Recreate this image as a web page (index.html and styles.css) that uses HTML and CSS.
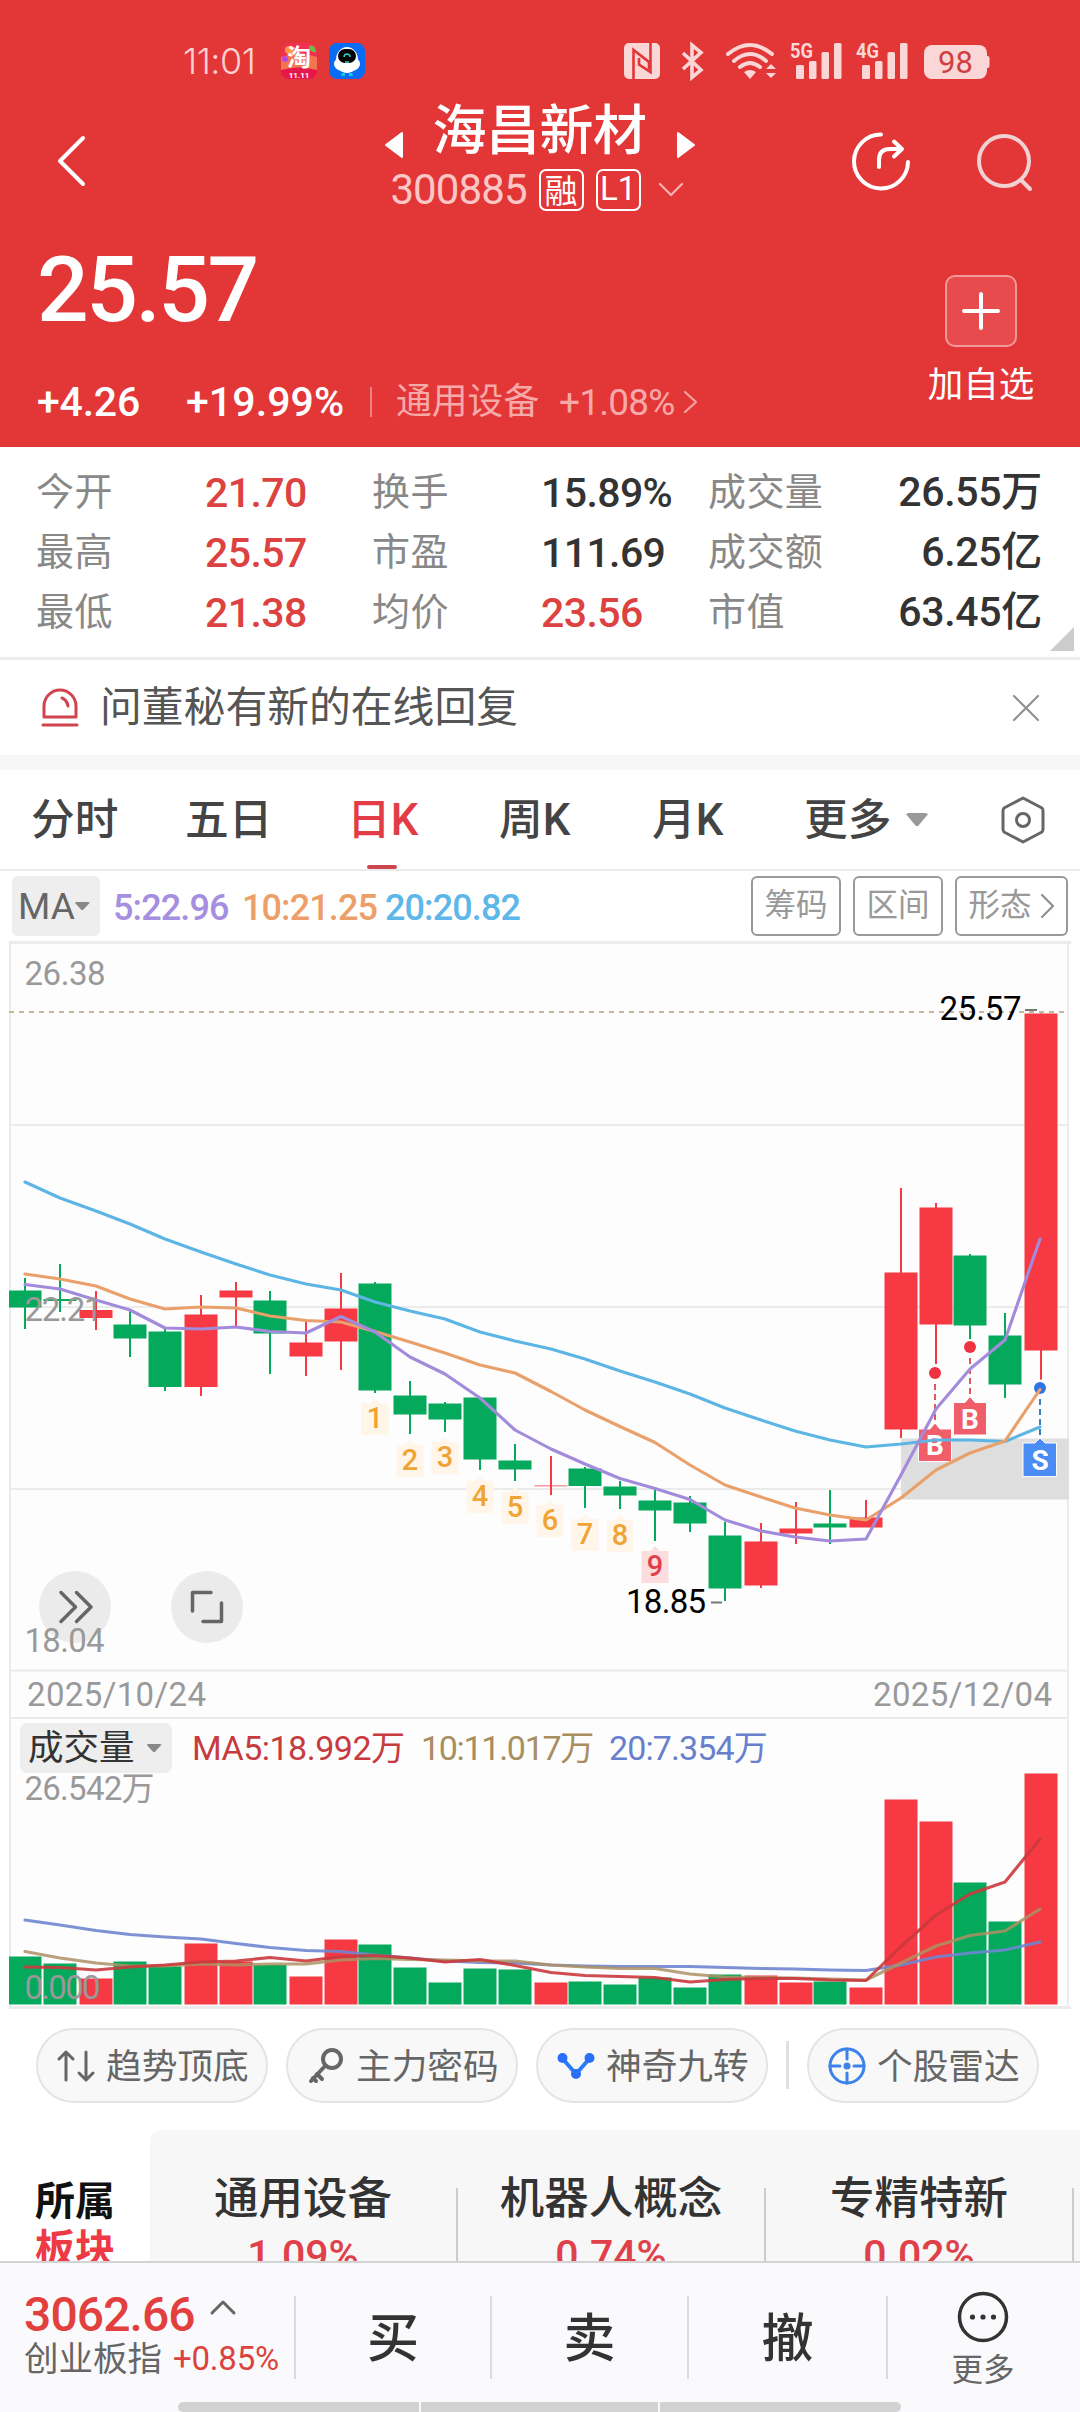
FILE: index.html
```html
<!DOCTYPE html>
<html lang="zh-CN">
<head>
<meta charset="utf-8">
<title>海昌新材 300885</title>
<link rel="stylesheet" href="styles.css">
</head>
<body>
<div class="screen">
  <header class="header">
    <div class="status">
      <span class="clock">11:01</span>
      <svg class="app" width="36" height="36" viewBox="0 0 36 36">
        <rect width="36" height="36" rx="8" fill="#f2304f"/>
        <path d="M0 14Q18 8 36 14V27H0z" fill="#f4744f"/>
        <circle cx="8" cy="7" r="4" fill="#ff9a3c"/><circle cx="4" cy="16" r="3" fill="#b64be0"/>
        <path d="M28 3q6-2 7 6q-6 1-7-6z" fill="#6cc04a"/>
        <path d="M0 27Q18 22 36 27V29Q34 36 28 36H8Q1 35 0 29z" fill="#e5174a"/>
        <text x="18" y="23" class="app-glyph">淘</text>
        <text x="18" y="34.500" class="app-sale">11.11</text>
      </svg>
      <svg class="app" width="36" height="36" viewBox="0 0 36 36">
        <rect width="36" height="36" rx="8" fill="#0a6cf5"/>
        <path d="M13 30h3v3h-4zM20 30h3l1 3h-4z" fill="#19c8d8"/>
        <ellipse cx="18" cy="21" rx="13" ry="8" fill="#fff"/><ellipse cx="18" cy="17" rx="11" ry="13" fill="#fff"/>
        <rect x="9" y="6" width="18" height="14" rx="7" fill="#000"/>
        <path d="M15 14a3 3 0 0 1 6 0M16 19h4" fill="none" stroke="#25d5c5" stroke-width="1.500"/>
      </svg>
      <svg class="signals" width="366" height="60" viewBox="624 31 366 60">
        <rect x="624" y="43" width="36" height="36" rx="5" fill="#fad6d6"/>
        <path d="M633.500 79V50L649 62V69M650.500 43V72L639 64.500V58" fill="none" stroke="#e33637" stroke-width="2.600"/>
        <path d="M683 53L701 70L692 77.500V45L701 52.500L683 69" fill="none" stroke="#fad6d6" stroke-width="3.600"/>
        <g fill="none" stroke="#fad6d6" stroke-width="4" stroke-linecap="round">
          <path d="M728 54Q750 36 772 54M734 61Q750 47 766 61M740 67Q750 59 760 67"/>
        </g>
        <path d="M744 72Q750 68 756 72L750 79zM766 69l5-5l5 5zM766 73l5 5l5-5z" fill="#fad6d6"/>
        <g fill="#fad6d6">
          <rect x="796" y="65" width="8" height="14" rx="1.500"/><rect x="809" y="61" width="7.500" height="18" rx="1.500"/><rect x="821.500" y="52" width="7.500" height="27" rx="1.500"/><rect x="834" y="43" width="7.500" height="36" rx="1.500"/>
          <rect x="862" y="65" width="8" height="14" rx="1.500"/><rect x="875" y="61" width="7.500" height="18" rx="1.500"/><rect x="887.500" y="52" width="7.500" height="27" rx="1.500"/><rect x="900" y="43" width="7.500" height="36" rx="1.500"/>
          <rect x="924" y="45" width="63" height="34" rx="8"/><rect x="985" y="56" width="4.500" height="12" rx="2"/>
        </g>
        <text x="790" y="57.500" class="net" textLength="23" lengthAdjust="spacingAndGlyphs">5G</text>
        <text x="856" y="57.500" class="net" textLength="23" lengthAdjust="spacingAndGlyphs">4G</text>
        <text x="955.500" y="72.500" class="battery">98</text>
      </svg>
    </div>

    <div class="nav">
      <svg class="back" width="30" height="52" viewBox="0 0 30 52"><path d="M26 3L3 26L26 49" class="line w4"/></svg>
      <div class="title">
        <div class="name-row">
          <svg width="18" height="28" viewBox="0 0 18 28"><path d="M17 2V26L1 14z" class="tri"/></svg>
          <h1>海昌新材</h1>
          <svg width="18" height="28" viewBox="0 0 18 28"><path d="M1 2V26L17 14z" class="tri"/></svg>
        </div>
        <div class="code-row">
          <span class="code">300885</span><span class="tag">融</span><span class="tag tag-l1">L1</span>
          <svg class="code-arrow" width="26" height="16" viewBox="0 0 26 16"><path d="M2 2L13 13L24 2" class="line w2 pale"/></svg>
        </div>
      </div>
      <div class="nav-actions">
        <svg width="60" height="60" viewBox="0 0 60 60"><path d="M30 2.500A27 27 0 1 0 57 30M28 35V28Q28 17 39 17H50M43 9.500L51 17L43 24.500" class="line w4"/></svg>
        <svg width="60" height="60" viewBox="0 0 60 60"><circle cx="29" cy="29" r="25" class="line w4 soft"/><path d="M46 48L55 57" class="line w4 soft"/></svg>
      </div>
    </div>

    <div class="quote">
      <div class="quote-main">
        <div class="price">25.57</div>
        <div class="change-row">
          <span class="chg">+4.26</span><span class="pct">+19.99%</span><i class="bar"></i>
          <span class="sector">通用设备</span><span class="sector-pct">+1.08%</span>
          <svg width="16" height="24" viewBox="0 0 16 24"><path d="M2 2L13 12L2 22" class="line w2 pink"/></svg>
        </div>
      </div>
      <div class="add">
        <div class="add-box"><svg width="40" height="40" viewBox="0 0 40 40"><path d="M20 3V37M3 20H37" class="line w4"/></svg></div>
        <span>加自选</span>
      </div>
    </div>
  </header>

  <section class="stats">
    <span class="k">今开</span><span class="v up">21.70</span><span class="k">换手</span><span class="v">15.89%</span><span class="k">成交量</span><span class="v end">26.55万</span>
    <span class="k">最高</span><span class="v up">25.57</span><span class="k">市盈</span><span class="v">111.69</span><span class="k">成交额</span><span class="v end">6.25亿</span>
    <span class="k">最低</span><span class="v up">21.38</span><span class="k">均价</span><span class="v up">23.56</span><span class="k">市值</span><span class="v end">63.45亿</span>
    <i class="corner"></i>
  </section>

  <section class="notice">
    <svg width="38" height="40" viewBox="0 0 38 40"><path d="M3 29V18a16 16 0 0 1 32 0V29zM2 37H36M21 10Q26 12 27 18" class="line w3 crimson"/></svg>
    <span>问董秘有新的在线回复</span>
    <svg class="close" width="30" height="30" viewBox="0 0 30 30"><path d="M3 3L27 27M27 3L3 27" class="line w2 gray"/></svg>
  </section>

  <nav class="tabs">
    <span>分时</span><span>五日</span><span class="active">日K</span><span>周K</span><span>月K</span><span>更多</span>
    <i class="caret"></i>
    <svg width="46" height="50" viewBox="0 0 46 50"><path d="M23 3L42 13Q43 14 43 16V34Q43 36 42 37L23 47L4 37Q3 36 3 34V16Q3 14 4 13z" class="line w3 dark"/><circle cx="23" cy="25" r="6.500" class="line w3 dark"/></svg>
  </nav>

  <div class="ma-row">
    <span class="ma-pick">MA<i class="caret small"></i></span>
    <span class="m5">5:22.96</span><span class="m10">10:21.25</span><span class="m20">20:20.82</span>
    <span class="btn first">筹码</span><span class="btn">区间</span><span class="btn wide">形态<svg width="14" height="26" viewBox="0 0 14 26"><path d="M1 2L12 13L1 24" class="line w2 gray"/></svg></span>
  </div>

  <svg class="chart" width="1080" height="778" viewBox="0 941 1080 778">
    <rect x="9" y="941" width="1060" height="778" fill="#fdfdfd"/>
    <g fill="#ebebeb">
      <rect x="9" y="941" width="1062" height="3"/><rect x="9" y="941" width="2" height="778"/><rect x="1067" y="941" width="2" height="778"/>
      <rect x="9" y="1124" width="1060" height="2"/><rect x="9" y="1306" width="1060" height="2"/><rect x="9" y="1488" width="1060" height="2"/><rect x="9" y="1669.500" width="1060" height="2"/><rect x="9" y="1717" width="1060" height="2"/>
    </g>
    <rect x="901" y="1438.500" width="168" height="61" fill="#dedede"/>
    <g fill="#05a95c">
      <rect x="9" y="1290.500" width="32.500" height="17"/><rect x="24" y="1278" width="2" height="51"/>
      <rect x="43.500" y="1299" width="33" height="2"/><rect x="59" y="1264" width="2" height="48"/>
      <rect x="113.500" y="1324.500" width="33" height="14"/><rect x="129" y="1311" width="2" height="46"/>
      <rect x="148.500" y="1331.500" width="33" height="55.500"/><rect x="164" y="1329" width="2" height="62"/>
      <rect x="253.500" y="1300.500" width="33" height="33"/><rect x="269" y="1291" width="2" height="83"/>
      <rect x="358.500" y="1283.500" width="33" height="107"/><rect x="374" y="1282" width="2" height="111"/>
      <rect x="393.500" y="1395.500" width="33" height="19"/><rect x="409" y="1381" width="2" height="53"/>
      <rect x="428.500" y="1403.500" width="33" height="16"/><rect x="444" y="1402" width="2" height="30"/>
      <rect x="463.500" y="1397.500" width="33" height="62"/><rect x="479" y="1397" width="2" height="73"/>
      <rect x="498.500" y="1460.500" width="33" height="9"/><rect x="514" y="1444" width="2" height="37"/>
      <rect x="568.500" y="1468.500" width="33" height="17.500"/><rect x="584" y="1467" width="2" height="41"/>
      <rect x="603.500" y="1486.500" width="33" height="9"/><rect x="619" y="1481" width="2" height="28"/>
      <rect x="638.500" y="1500.500" width="33" height="10"/><rect x="654" y="1489" width="2" height="52"/>
      <rect x="673.500" y="1502.500" width="33" height="21"/><rect x="689" y="1496" width="2" height="36"/>
      <rect x="708.500" y="1535.500" width="33" height="53"/><rect x="724" y="1522" width="2" height="79"/>
      <rect x="813.500" y="1523.500" width="33" height="4"/><rect x="829" y="1490" width="2" height="54"/>
      <rect x="953.500" y="1255.500" width="33" height="70"/><rect x="969" y="1254" width="2" height="85"/>
      <rect x="988.500" y="1335.500" width="33" height="49"/><rect x="1004" y="1313" width="2" height="85"/>
    </g>
    <g fill="#f63943">
      <rect x="79.500" y="1310" width="33" height="8"/><rect x="95" y="1291" width="2" height="39"/>
      <rect x="184.500" y="1314.500" width="33" height="72.500"/><rect x="200" y="1295" width="2" height="101"/>
      <rect x="219.500" y="1290.500" width="33" height="7"/><rect x="235" y="1282" width="2" height="45"/>
      <rect x="289.500" y="1342.500" width="33" height="14"/><rect x="305" y="1322" width="2" height="54"/>
      <rect x="324.500" y="1308.500" width="33" height="33"/><rect x="340" y="1273" width="2" height="97"/>
      <rect x="534.500" y="1485" width="33" height="1.500" opacity=".5"/><rect x="550" y="1456" width="2" height="39"/>
      <rect x="744.500" y="1541.500" width="33" height="44"/><rect x="760" y="1523" width="2" height="65"/>
      <rect x="779.500" y="1528.500" width="33" height="5"/><rect x="795" y="1502" width="2" height="42"/>
      <rect x="849.500" y="1517.500" width="33" height="10"/><rect x="865" y="1500" width="2" height="18"/>
      <rect x="884.500" y="1272.500" width="33" height="157"/><rect x="900" y="1188" width="2" height="250"/>
      <rect x="919.500" y="1207.500" width="33" height="117"/><rect x="935" y="1203" width="2" height="161"/>
      <rect x="1024.500" y="1013.500" width="33" height="337"/><rect x="1040" y="1013.500" width="2" height="366"/>
    </g>
    <path d="M9 1012H1069" stroke="#c5b799" stroke-width="2" stroke-dasharray="5 5"/>
    <g fill="#fff5e9">
      <path d="M361.500 1403h9l4.500-5l4.500 5h9v32h-27z"/><path d="M396.500 1445h9l4.500-5l4.500 5h9v32h-27z"/><path d="M431.500 1442h9l4.500-5l4.500 5h9v32h-27z"/>
      <path d="M466.500 1481h9l4.500-5l4.500 5h9v32h-27z"/><path d="M501.500 1492h9l4.500-5l4.500 5h9v32h-27z"/><path d="M536.500 1505h9l4.500-5l4.500 5h9v32h-27z"/>
      <path d="M571.500 1519h9l4.500-5l4.500 5h9v32h-27z"/><path d="M606.500 1520h9l4.500-5l4.500 5h9v32h-27z"/><path d="M641.500 1551h9l4.500-5l4.500 5h9v32h-27z" fill="#fddcde"/>
    </g>
    <g class="nine">
      <text x="375" y="1428">1</text><text x="410" y="1470">2</text><text x="445" y="1467">3</text><text x="480" y="1506">4</text><text x="515" y="1517">5</text><text x="550" y="1530">6</text><text x="585" y="1544">7</text><text x="620" y="1545">8</text><text x="655" y="1576" fill="#e0404a">9</text>
    </g>
    <path d="M935 1384V1424M970 1358V1394" stroke="#e0565f" stroke-width="2" stroke-dasharray="6 4"/>
    <circle cx="935" cy="1373" r="6" fill="#f03340"/><circle cx="970" cy="1347" r="6" fill="#f03340"/>
    <g fill="#f05f69" stroke="#fff">
      <path d="M918.500 1429H930L935 1423L940 1429H951.500V1461.500H918.500z"/><path d="M953.500 1402.500H965L970 1396.500L975 1402.500H986.500V1435H953.500z"/>
    </g>
    <text x="935" y="1455" class="mark">B</text><text x="970" y="1429" class="mark">B</text>
    <path d="M1040 1399V1436" stroke="#3f7fc0" stroke-width="2" stroke-dasharray="6 4"/><circle cx="1040" cy="1388" r="6" fill="#2f73e6"/>
    <path d="M1023 1443H1035L1040 1438L1045 1443H1056.500V1476.500H1023z" fill="#4a8bf4" stroke="#fff"/><text x="1040" y="1470" class="mark">S</text>
    <g fill="none" stroke-width="3.100" stroke-linejoin="round" stroke-linecap="round">
      <path stroke="#5db5e4" d="M25 1182L60 1198L96 1211L130 1224L165 1239L201 1252L236 1264L270 1275L306 1284L341 1290L375 1302L410 1311L445 1319L480 1332L515 1341L551 1349L585 1359L620 1371L655 1382L690 1394L725 1408L761 1420L795 1431L830 1440L866 1447L901 1444L936 1440L970 1440L1005 1441.500L1040 1427"/>
      <path stroke="#e9a06a" d="M25 1274L60 1279L96 1286L130 1299L165 1309L201 1307L236 1308L270 1316L306 1320.500L341 1322L375 1331.500L410 1342L445 1353L480 1365L515 1373L551 1391.500L585 1410L620 1426.500L655 1442.500L690 1465L725 1485L761 1497L795 1508L830 1515L866 1520L901 1498L936 1470L970 1453L1005 1441L1040 1389.500"/>
      <path stroke="#a38bdb" d="M25 1284.500L60 1289L96 1300L130 1310L165 1328L201 1329L236 1327L270 1331.500L306 1333L341 1316.500L375 1332L410 1357L445 1374L480 1398L515 1430L551 1449L585 1464L620 1478.500L655 1488.500L690 1499.500L725 1520L761 1531L795 1537L830 1541L866 1539L901 1475L936 1409L970 1369L1005 1340L1040 1239"/>
    </g>
    <circle cx="75" cy="1607" r="36" fill="#ebebeb"/><circle cx="207" cy="1607" r="36" fill="#ebebeb"/>
    <path d="M61 1592.500L75.500 1607L61 1621.500M76.500 1592.500L91 1607L76.500 1621.500M211 1592.500H192.500V1611M203 1621.500H221.500V1603" fill="none" stroke="#666" stroke-width="3.500" stroke-linecap="round" stroke-linejoin="round"/>
    <g class="axis">
      <text x="24.500" y="985" textLength="81">26.38</text><text x="24.500" y="1321" textLength="78">22.21</text><text x="24.500" y="1652" textLength="80">18.04</text>
      <text x="27" y="1706" textLength="179">2025/10/24</text><text x="873" y="1706" textLength="179">2025/12/04</text>
    </g>
    <g class="extreme"><text x="939.500" y="1020" textLength="82">25.57</text><text x="626" y="1613" textLength="80">18.85</text></g>
    <path d="M1025 1010H1037M711 1602.500H722" stroke="#777" stroke-width="2"/>
  </svg>

  <div class="vol-row">
    <span class="vol-pick">成交量<i class="caret small"></i></span>
    <span class="v5">MA5:18.992万</span><span class="v10">10:11.017万</span><span class="v20">20:7.354万</span>
  </div>

  <svg class="chart" width="1080" height="237" viewBox="0 1773 1080 237">
    <rect x="9" y="1773" width="1060" height="233" fill="#fdfdfd"/>
    <g fill="#ebebeb"><rect x="9" y="1773" width="2" height="233"/><rect x="1067" y="1773" width="2" height="233"/><rect x="9" y="2006" width="1062" height="3"/></g>
    <g fill="#05a95c">
      <rect x="9" y="1956.500" width="32.500" height="48"/><rect x="43.500" y="1963.500" width="33" height="41"/><rect x="113.500" y="1961.500" width="33" height="43"/><rect x="148.500" y="1966.500" width="33" height="38"/>
      <rect x="253.500" y="1965" width="33" height="39.500"/><rect x="358.500" y="1944.500" width="33" height="60"/><rect x="393.500" y="1967.500" width="33" height="37"/><rect x="428.500" y="1982.500" width="33" height="22"/>
      <rect x="463.500" y="1968.500" width="33" height="36"/><rect x="498.500" y="1969.500" width="33" height="35"/><rect x="568.500" y="1981.500" width="33" height="23"/><rect x="603.500" y="1984.500" width="33" height="20"/>
      <rect x="638.500" y="1977.500" width="33" height="27"/><rect x="673.500" y="1987.500" width="33" height="17"/><rect x="708.500" y="1974.500" width="33" height="30"/><rect x="813.500" y="1981.500" width="33" height="23"/>
      <rect x="953.500" y="1882.500" width="33" height="122"/><rect x="988.500" y="1921.500" width="33" height="83"/>
    </g>
    <g fill="#f63943">
      <rect x="79.500" y="1978.500" width="33" height="26"/><rect x="184.500" y="1943.500" width="33" height="61"/><rect x="219.500" y="1961.500" width="33" height="43"/><rect x="289.500" y="1976.500" width="33" height="28"/>
      <rect x="324.500" y="1939.500" width="33" height="65"/><rect x="534.500" y="1982.500" width="33" height="22"/><rect x="744.500" y="1975.500" width="33" height="29"/><rect x="779.500" y="1982.500" width="33" height="22"/>
      <rect x="849.500" y="1987.500" width="33" height="17"/><rect x="884.500" y="1799.500" width="33" height="205"/><rect x="919.500" y="1821.500" width="33" height="183"/><rect x="1024.500" y="1773.500" width="33" height="231"/>
    </g>
    <g fill="none" stroke-width="3.100" stroke-linejoin="round" stroke-linecap="round">
      <path stroke="#6f86d0" stroke-opacity=".9" d="M25 1920L60 1925L96 1930.500L130 1934.500L165 1937L201 1939L236 1943.500L270 1947.500L306 1950.500L341 1951.500L375 1955L410 1958L445 1961L480 1962.500L515 1963L551 1965L585 1966L620 1966.500L690 1966.500L725 1967.500L761 1968.500L795 1969L830 1970L866 1970.500L901 1965L936 1957L970 1953L1005 1950L1040 1942"/>
      <path stroke="#ad9164" stroke-opacity=".85" d="M25 1951.500L60 1958L96 1963L130 1966L165 1966L201 1964L236 1965L270 1964L306 1964L341 1960L375 1958.500L410 1959.500L445 1960L480 1961L515 1961L551 1965L585 1967L620 1968.500L655 1968.500L690 1974L725 1977L761 1977.500L795 1978L830 1979L866 1980L901 1963L936 1946L970 1935.500L1005 1931L1040 1909"/>
      <path stroke="#ca3a3d" stroke-opacity=".9" d="M25 1967L60 1967.500L96 1970L130 1967L165 1965L201 1962L236 1961L270 1957.500L306 1961L341 1956.500L375 1955.500L410 1958L445 1962L480 1959.500L515 1965.500L551 1972.500L585 1975.500L620 1976.500L655 1977.500L690 1982L725 1979.500L761 1978.500L795 1978.500L830 1980L866 1980.500L901 1946.500L936 1915L970 1894L1005 1882L1040 1839"/>
    </g>
    <g class="axis"><text x="24.500" y="1800" textLength="130">26.542万</text><text x="24.500" y="1999" textLength="76">0.000</text></g>
  </svg>

  <div class="chips">
    <span class="chip"><svg width="38" height="32" viewBox="0 0 38 32"><path d="M9 30V2L2 9M9 2L16 9M29 2V30L22 23M29 30L36 23" class="line w3 dark"/></svg><b>趋势顶底</b></span>
    <span class="chip"><svg width="38" height="38" viewBox="0 0 38 38"><circle cx="25" cy="12" r="9" class="line w4 dark"/><path d="M18.500 18.500L4 34M10 27L15 32M6 31L9 34" class="line w4 dark"/></svg><b>主力密码</b></span>
    <span class="chip"><svg width="38" height="28" viewBox="0 0 38 28"><path d="M5 6L19 22L33 6" fill="none" stroke="#2b7cf6" stroke-width="4"/><circle cx="5.500" cy="6" r="5" fill="#2b6ff6"/><circle cx="32.500" cy="6" r="5" fill="#2b6ff6"/><circle cx="19" cy="22" r="5" fill="#2b6ff6"/></svg><b>神奇九转</b></span>
    <i class="chip-bar"></i>
    <span class="chip"><svg width="38" height="38" viewBox="0 0 38 38"><circle cx="19" cy="19" r="17" class="line w3 blue"/><path d="M19 2V12M19 26V36M2 19H12M26 19H36" class="line w3 blue"/><circle cx="19" cy="19" r="3.500" fill="#3d82ea"/></svg><b>个股雷达</b></span>
  </div>

  <section class="boards">
    <div class="boards-title"><b>所属</b><b class="hot">板块</b></div>
    <div class="board"><span>通用设备</span><em>1.09%</em></div>
    <div class="board"><span>机器人概念</span><em>0.74%</em></div>
    <div class="board"><span>专精特新</span><em>0.02%</em></div>
  </section>

  <footer class="footer">
    <div class="index">
      <div class="index-top"><span>3062.66</span><svg width="26" height="16" viewBox="0 0 26 16"><path d="M2 13L13 2L24 13" class="line w3 dark"/></svg></div>
      <div class="index-bottom"><span>创业板指</span><em>+0.85%</em></div>
    </div>
    <div class="act">买</div><div class="act">卖</div><div class="act">撤</div>
    <div class="more">
      <svg width="52" height="52" viewBox="0 0 52 52"><circle cx="26" cy="26" r="23.500" fill="none" stroke="#333" stroke-width="3.500"/><circle cx="15.500" cy="26" r="2.600" fill="#333"/><circle cx="26" cy="26" r="2.600" fill="#333"/><circle cx="36.500" cy="26" r="2.600" fill="#333"/></svg>
      <span>更多</span>
    </div>
    <div class="home"><i></i><i></i><i></i></div>
  </footer>
</div>
</body>
</html>
```
FILE: styles.css
```css
* { box-sizing: border-box; }
html, body { margin: 0; padding: 0; }
body { background: #fff; font-family: Roboto, "Noto Sans CJK SC", sans-serif; color: #333; }
i, em { font-style: normal; }
svg { display: block; flex: none; overflow: visible; }
span { white-space: nowrap; }
.screen { width: 1080px; height: 2412px; overflow: hidden; display: flex; flex-direction: column; }
.screen > * { flex: none; }

.line { fill: none; stroke: #fff; stroke-linecap: round; stroke-linejoin: round; }
.w2 { stroke-width: 2.2; }
.w3 { stroke-width: 3; }
.w4 { stroke-width: 4; }
.pale { stroke: #f7b5b5; }
.pink { stroke: #f5a3a3; }
.soft { stroke: #f0d2d3; }
.crimson { stroke: #d0454d; }
.gray { stroke: #909090; }
.dark { stroke: #666; }
.blue { stroke: #3d82ea; }
.tri { fill: #fff; stroke: #fff; stroke-width: 2; stroke-linejoin: round; }

/* header */
.header { height: 447px; background: #e33637; color: #fff; }
.status { height: 96px; padding: 26px 90px 0 183px; display: flex; align-items: center; }
.clock { width: 98px; font: 300 36px/40px Inter, sans-serif; letter-spacing: -0.5px; color: #fbd0d0; }
.app { margin-right: 12px; }
.app-glyph { font: 700 24px "Noto Sans CJK SC", sans-serif; fill: #fff; text-anchor: middle; }
.app-sale { font: 700 8px Roboto, sans-serif; fill: #fff; text-anchor: middle; }
.signals { margin-left: auto; }
.net { font: 700 21px Roboto, sans-serif; fill: #fad6d6; }
.battery { font: 400 31px Roboto, sans-serif; fill: #cf4043; text-anchor: middle; }

.nav { height: 130px; padding: 0 45px 0 57px; display: grid; grid-template-columns: 240px 1fr 180px; align-items: center; }
.title { align-self: start; display: flex; flex-direction: column; align-items: center; margin-top: -3px; padding-right: 73px; }
.name-row { display: flex; gap: 30px; align-items: center; height: 68px; margin-bottom: 4px; }
.name-row svg { margin-top: 35px; }
h1 { margin: 0; font: 500 54px/68px "Noto Sans CJK SC", sans-serif; letter-spacing: -0.5px; }
.code-row { height: 50px; display: flex; align-items: center; padding-right: 5px; }
.code { font-size: 42px; line-height: 50px; letter-spacing: -0.9px; color: #fbc6c6; margin-right: 12px; }
.tag { width: 45px; height: 42px; border: 2.500px solid #fff; border-radius: 7px; margin-right: 12px; font: 400 33px/36px "Noto Sans CJK SC", sans-serif; text-align: center; }
.tag-l1 { font-family: Roboto, sans-serif; }
.code-arrow { margin-left: 5px; }
.nav-actions { display: flex; gap: 64px; justify-content: flex-end; margin-top: 2px; }

.quote { display: flex; justify-content: space-between; padding: 19px 45px 0 37px; }
.price { font-size: 91px; font-weight: 500; line-height: 90px; letter-spacing: -2.500px; }
.change-row { display: flex; align-items: center; height: 50px; margin-top: 42px; }
.chg, .pct { font-size: 41px; font-weight: 500; letter-spacing: -0.2px; }
.chg { width: 149px; }
.pct { width: 184px; letter-spacing: 0.1px; }
.bar { width: 2px; height: 30px; background: #f08081; margin-right: 24px; }
.sector { font-size: 35.800px; line-height: 50px; color: #f6a9a9; width: 163px; padding-bottom: 1px; }
.sector-pct { font-size: 37px; color: #f6a9a9; width: 124px; letter-spacing: -0.8px; }
.add { display: flex; flex-direction: column; align-items: center; padding-top: 30px; width: 108px; }
.add-box { width: 72px; height: 72px; display: flex; align-items: center; justify-content: center; border: 2px solid #f29a9a; border-radius: 10px; background: #e84b4d; }
.add span { font-size: 35.500px; line-height: 50px; margin-top: 13px; }

/* stats */
.stats { height: 213px; padding: 15px 38px 0 36px; display: grid; grid-template-columns: 169px 167px 169px 167px 160px 1fr; grid-auto-rows: 60px; align-items: center; border-bottom: 3px solid #ebebeb; position: relative; }
.k { font-size: 38px; line-height: 54px; color: #888; letter-spacing: .4px; }
.v { font-size: 41px; font-weight: 500; letter-spacing: -0.6px; padding-top: 2px; }
.up { color: #dc4240; }
.end { text-align: right; line-height: 54px; padding-top: 0; letter-spacing: -0.3px; }
.corner { position: absolute; right: 6px; bottom: 6px; border-left: 24px solid transparent; border-bottom: 24px solid #ccc; }

.notice { height: 110px; padding: 0 39px 0 41px; display: flex; align-items: center; border-bottom: 15px solid #f7f7f7; }
.notice span { font-size: 41.800px; line-height: 60px; color: #555; margin-left: 21px; padding-top: 1px; }
.close { margin-left: auto; }

/* chart tabs */
.tabs { height: 101px; display: flex; align-items: center; padding-left: 31px; font-size: 43.700px; font-weight: 500; color: #444; border-bottom: 2px solid #ebebeb; line-height: 97px; }
.tabs span { padding-top: 2px; }
.tabs span:nth-child(1) { width: 154px; }
.tabs span:nth-child(2) { width: 162px; }
.tabs span:nth-child(3) { width: 152px; }
.tabs span:nth-child(4) { width: 153px; }
.tabs span:nth-child(5) { width: 152px; }
.tabs span:nth-child(6) { width: 102px; }
.tabs .active { color: #e23d47; position: relative; }
.active::after { content: ""; position: absolute; left: 20px; bottom: 0; width: 30px; height: 4px; border-radius: 2px; background: #cc4650; }
.caret { display: block; width: 22px; height: 13px; background: #999; clip-path: polygon(0 10%, 10% 0, 90% 0, 100% 10%, 55% 100%, 45% 100%); }
.tabs svg { margin-left: 72px; }
.caret.small { width: 15px; height: 8px; background: #888; }

.ma-row { height: 70px; padding: 0 12px 0 12px; display: flex; align-items: center; font-size: 36px; }
.ma-pick { width: 88px; height: 60px; border-radius: 6px; background: #eee; color: #666; display: flex; align-items: center; padding-left: 6px; font-size: 37px; margin-right: 13px; }
.m5 { width: 129px; color: #a68ee0; }
.m10 { width: 143px; color: #ec9f68; }
.m20 { color: #5db7e8; }
.m5, .m10, .m20 { font-weight: 500; font-size: 36px; letter-spacing: -0.9px; padding-top: 3px; }
.btn { width: 90px; height: 60px; margin-left: 12px; border: 2px solid #999; border-radius: 6px; color: #999; font-size: 31.500px; line-height: 56px; display: flex; justify-content: center; align-items: center; }
.btn.first { margin-left: auto; }
.btn.wide { width: 113px; gap: 9px; }
.axis { font-size: 33px; fill: #999; }
.extreme { font-size: 33px; fill: #000; }
.nine { font-size: 29px; font-weight: 500; fill: #f0a435; text-anchor: middle; }
.mark { font-size: 28px; font-weight: 700; fill: #fff; text-anchor: middle; }

.vol-row { height: 54px; margin: 0 11px 0 9px; padding-left: 9px; display: flex; align-items: center; background: #fdfdfd; border-left: 2px solid #ebebeb; border-right: 2px solid #ebebeb; }
.vol-pick { width: 152px; height: 50px; margin-top: 4px; padding-left: 8px; border-radius: 7px; background: #eee; display: flex; align-items: center; gap: 12px; font-size: 35.500px; line-height: 50px; margin-right: 20px; }
.v5, .v10, .v20 { font-size: 34px; line-height: 50px; padding-top: 4px; }
.v5 { color: #c63b3e; width: 229px; letter-spacing: -0.5px; }
.v10 { color: #a98e60; width: 188px; letter-spacing: -1.300px; }
.v20 { color: #6880cc; letter-spacing: -0.9px; }

/* indicator chips */
.chips { height: 120px; padding: 18px 0 0 36px; display: flex; gap: 18px; }
.chip { width: 232px; height: 75px; border: 2.500px solid #e4e4e4; border-radius: 38px; background: #f8f8f8; color: #666; font-size: 35.700px; line-height: 68px; display: flex; align-items: center; gap: 11px; padding-left: 19px; }
.chip b { font-weight: 400; padding-top: 3px; }
.chip-bar { width: 3px; height: 48px; margin-top: 13px; background: #e0e0e0; }

/* boards */
.boards { height: 131px; overflow: hidden; display: grid; grid-template-columns: 150px 308px 308px 308px; background: linear-gradient(90deg, #fff 170px, #f7f7f7 170px); }
.boards-title { display: flex; flex-direction: column; padding: 48px 0 0 35px; font-size: 40px; line-height: 48px; color: #111; background: #fff; }
.boards-title b { font-weight: 700; white-space: nowrap; }
.boards-title .hot { color: #ee3a45; }
.board { position: relative; display: flex; flex-direction: column; align-items: center; padding: 42px 2px 0 0; background: #f7f7f7; }
.board:nth-child(2) { border-top-left-radius: 12px; }
.board::after { content: ""; position: absolute; right: 0; top: 58px; width: 2px; height: 80px; background: #ccc; }
.board span { font-size: 44.500px; font-weight: 500; line-height: 54px; }
.board em { font-size: 41px; font-weight: 500; line-height: 48px; color: #e04049; margin-top: 5px; }

/* footer */
.footer { position: relative; height: 151px; background: #fafafc; border-top: 2px solid #d3d3d5; display: grid; grid-template-columns: 294px 196px 197px 199px 194px; }
.index { padding: 23px 0 0 24px; }
.index-top { display: flex; align-items: center; gap: 15px; height: 56px; }
.index-top span { font-size: 48px; font-weight: 500; color: #e2403e; letter-spacing: -0.900px; }
.index-top svg { margin-top: -12px; }
.index-bottom { display: flex; align-items: center; height: 34px; font-size: 34.500px; line-height: 34px; color: #666; }
.index-bottom em { font-size: 33px; color: #dc4240; margin-left: 11px; letter-spacing: -0.2px; }
.act { position: relative; display: flex; justify-content: center; padding: 40px 0 0 2px; font-size: 52px; font-weight: 500; line-height: 74px; }
.act::before, .more::before { content: ""; position: absolute; left: 0; top: 33px; width: 2px; height: 83px; background: #dcdce0; }
.more { position: relative; display: flex; flex-direction: column; align-items: center; padding-top: 28px; }
.more span { font-size: 31.500px; line-height: 40px; margin-top: 8px; color: #666; }
.home { position: absolute; left: 178px; bottom: 0; width: 723px; height: 10px; display: grid; grid-template-columns: 241px 237px 241px; gap: 2px; overflow: hidden; border-radius: 6px; }
.home i { background: #d2d2d2; }
```
